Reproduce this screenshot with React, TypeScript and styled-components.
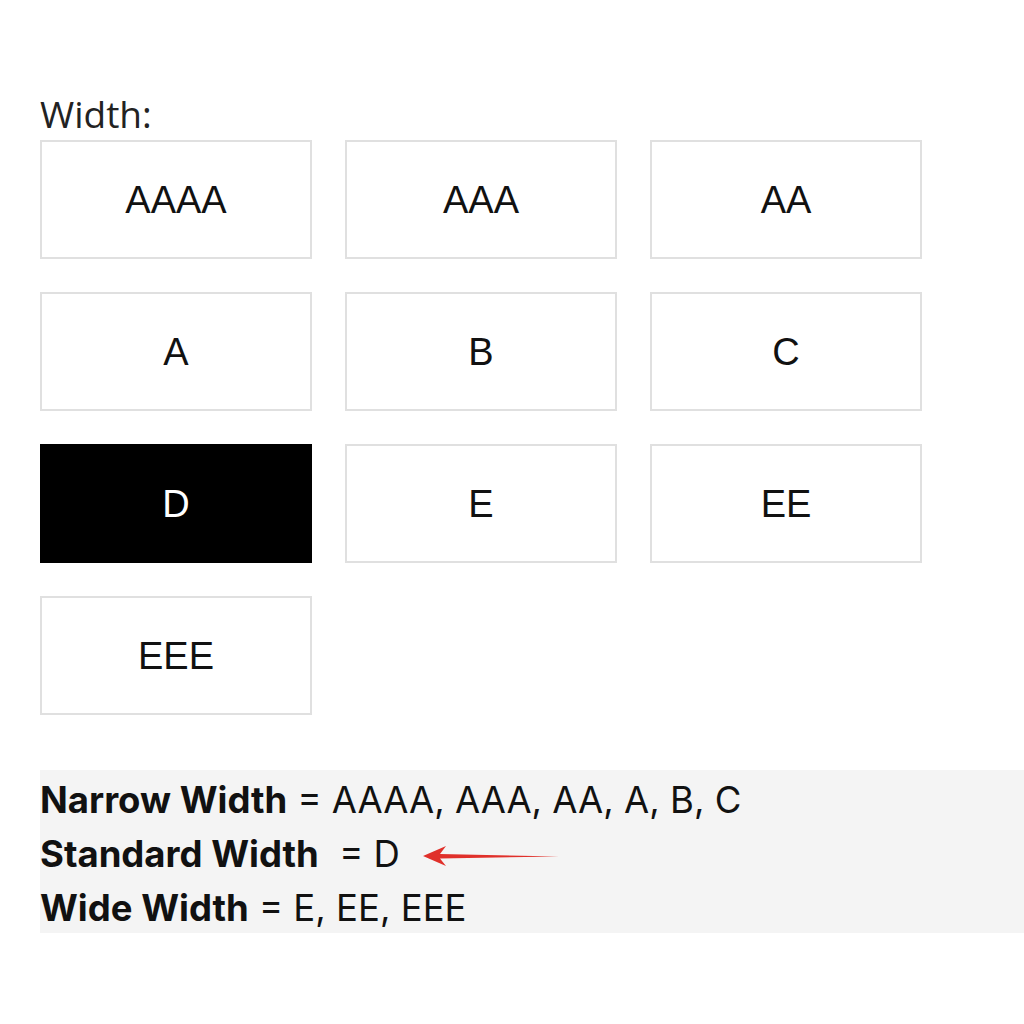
import styled, { createGlobalStyle } from "styled-components";

const GlobalStyle = createGlobalStyle`
  body {
    margin: 0;
    background: #ffffff;
    font-family: "Liberation Sans", Arial, sans-serif;
    color: #111;
  }
`;

const Page = styled.div`
  padding: 91px 0 0 40px;
`;

const Label = styled.div`
  font-family: "Open Sans", sans-serif;
  font-size: 37px;
  line-height: 45px;
  color: #222;
  margin-bottom: 4px;
`;

const SizeGrid = styled.div`
  display: grid;
  grid-template-columns: repeat(3, 272px);
  grid-auto-rows: 119px;
  column-gap: 33px;
  row-gap: 33px;
`;

const SizeButton = styled.div<{ $active?: boolean }>`
  box-sizing: border-box;
  display: flex;
  align-items: center;
  justify-content: center;
  padding-top: 2px;
  border: 2px solid ${(p) => (p.$active ? "#000" : "#e0e0e0")};
  background: ${(p) => (p.$active ? "#000" : "#fff")};
  color: ${(p) => (p.$active ? "#fff" : "#111")};
  font-size: 38px;
`;

const Legend = styled.div`
  margin-top: 55px;
  background: #f4f4f4;
  padding: 3px 0 0 0;
  height: 163px;
  box-sizing: border-box;
  display: flex;
  flex-direction: column;
  font-family: Inter, "Liberation Sans", sans-serif;
`;

const LegendRow = styled.div`
  display: flex;
  align-items: center;
  font-size: 36.5px;
  line-height: 54px;
  white-space: pre;
`;

const Strong = styled.b`
  font-weight: 700;
`;

const Arrow = styled.svg`
  margin-left: 22px;
  margin-top: 4px;
  width: 138px;
  height: 26px;
`;

const sizes = ["AAAA", "AAA", "AA", "A", "B", "C", "D", "E", "EE", "EEE"];

export default function App() {
  return (
    <Page>
      <GlobalStyle />
      <Label>Width:</Label>
      <SizeGrid>
        {sizes.map((s) => (
          <SizeButton key={s} $active={s === "D"}>
            {s}
          </SizeButton>
        ))}
      </SizeGrid>
      <Legend>
        <LegendRow>
          <Strong>Narrow Width</Strong> = AAAA, AAA, AA, A, B, C
        </LegendRow>
        <LegendRow>
          <Strong>Standard Width</Strong>  = D
          <Arrow viewBox="0 0 138 26">
            <path d="M1 13 L24 3 L18 11 L137 13.5 L18 15.5 L24 23 Z" fill="#e0302a" />
          </Arrow>
        </LegendRow>
        <LegendRow>
          <Strong>Wide Width</Strong> = E, EE, EEE
        </LegendRow>
      </Legend>
    </Page>
  );
}
